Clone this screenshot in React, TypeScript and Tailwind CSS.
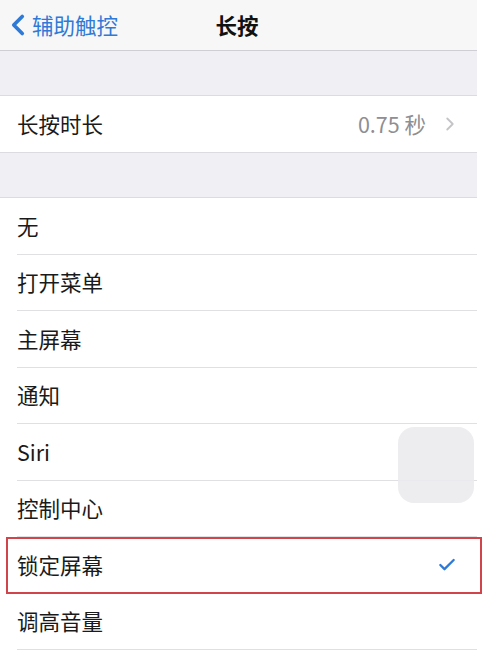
import { Check, ChevronLeft, ChevronRight } from "lucide-react";

const OPTIONS = ["无", "打开菜单", "主屏幕", "通知", "Siri", "控制中心", "锁定屏幕", "调高音量"];
const SELECTED = "锁定屏幕";

const font = {
  fontFamily: '"Noto Sans CJK SC", "Liberation Sans", sans-serif',
};

export default function App() {
  return (
    <div className="relative h-[650px] w-[487px] overflow-hidden bg-white" style={font}>
      <div className="w-[477px]">
        {/* nav bar */}
        <header className="relative flex h-[51px] items-center border-b border-[#cfcfd3] bg-[#f7f7f8]">
          <div className="flex items-center pl-[1px] text-[#2f7ad6]">
            <ChevronLeft size={34} strokeWidth={2.6} className="-mr-[3px]" />
            <span className="text-[21.5px] leading-none">辅助触控</span>
          </div>
          <h1 className="absolute left-[237px] -translate-x-1/2 text-[21.5px] font-bold leading-none text-[#111]">
            长按
          </h1>
        </header>

        <div className="h-[45px] border-b border-[#dcdce0] bg-[#efeff4]" />

        <div className="flex h-[56px] items-center justify-between bg-white pl-[17px] pr-[16px]">
          <span className="text-[21.5px] text-[#1a1a1a]">长按时长</span>
          <div className="flex items-center gap-[13px] text-[#8e8e93]">
            <span className="text-[21.5px]">0.75 秒</span>
            <ChevronRight size={22} strokeWidth={2} className="text-[#c4c4c8]" />
          </div>
        </div>

        <div className="h-[46px] border-y border-[#dcdce0] bg-[#efeff4]" />

        <ul className="bg-white">
          {OPTIONS.map((opt) => (
            <li key={opt} className="pl-[17px]">
              <div className="flex h-[56.5px] items-center justify-between border-b border-[#e0e0e3] pr-[20px]">
                <span className="text-[21.5px] text-[#1a1a1a]">{opt}</span>
                {opt === SELECTED && (
                  <Check size={20} strokeWidth={2.8} className="text-[#2f7ad6]" />
                )}
              </div>
            </li>
          ))}
        </ul>
      </div>

      {/* assistive touch button */}
      <div className="absolute left-[398px] top-[427px] h-[76px] w-[76px] rounded-[16px] bg-[#ebebee]/90" />

      {/* annotation box */}
      <div className="absolute left-[6px] top-[537px] h-[57px] w-[476px] border-2 border-[#d0454c]" />
    </div>
  );
}
